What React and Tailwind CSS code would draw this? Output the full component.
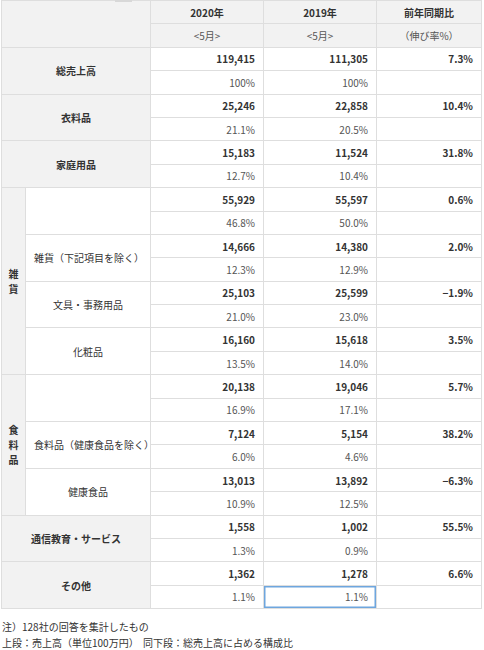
const ROWS = [
  { label: '総売上高', bold: true, v: ['119,415', '111,305', '7.3%'], p: ['100%', '100%'] },
  { label: '衣料品', bold: true, v: ['25,246', '22,858', '10.4%'], p: ['21.1%', '20.5%'] },
  { label: '家庭用品', bold: true, v: ['15,183', '11,524', '31.8%'], p: ['12.7%', '10.4%'] },
  { group: '雑貨', label: '', v: ['55,929', '55,597', '0.6%'], p: ['46.8%', '50.0%'] },
  { group: '雑貨', label: '雑貨（下記項目を除く）', v: ['14,666', '14,380', '2.0%'], p: ['12.3%', '12.9%'] },
  { group: '雑貨', label: '文具・事務用品', v: ['25,103', '25,599', '−1.9%'], p: ['21.0%', '23.0%'] },
  { group: '雑貨', label: '化粧品', v: ['16,160', '15,618', '3.5%'], p: ['13.5%', '14.0%'] },
  { group: '食料品', label: '', v: ['20,138', '19,046', '5.7%'], p: ['16.9%', '17.1%'] },
  { group: '食料品', label: '食料品（健康食品を除く）', v: ['7,124', '5,154', '38.2%'], p: ['6.0%', '4.6%'] },
  { group: '食料品', label: '健康食品', v: ['13,013', '13,892', '−6.3%'], p: ['10.9%', '12.5%'] },
  { label: '通信教育・サービス', bold: true, v: ['1,558', '1,002', '55.5%'], p: ['1.3%', '0.9%'] },
  { label: 'その他', bold: true, v: ['1,362', '1,278', '6.6%'], p: ['1.1%', '1.1%'], selected: true },
];

const GROUP_SIZE = { '雑貨': 4, '食料品': 3 };

const cell = 'border border-[#dedede] px-2 align-middle';

function VerticalLabel({ text }) {
  return (
    <div className="flex flex-col items-center leading-[15px] font-bold">
      {text.split('').map((c, i) => <span key={i}>{c}</span>)}
    </div>
  );
}

export default function App() {
  const seen = {};
  return (
    <div className="relative w-[484px] h-[650px] bg-white text-[#333] text-[10px]" style={{ fontFamily: '"Noto Sans CJK JP", "Noto Sans", sans-serif' }}>
      <div className="absolute left-[115px] top-0 w-[17px] h-[2px] bg-[#d8d8d8]" />
      <table className="ml-[1px] w-[480px] table-fixed border-collapse">
        <colgroup>
          <col className="w-[24px]" />
          <col className="w-[125px]" />
          <col className="w-[113px]" />
          <col className="w-[113px]" />
          <col className="w-[105px]" />
        </colgroup>
        <tbody>
          <tr className="h-[23.4px]">
            <td colSpan={2} rowSpan={2} className={`${cell} bg-[#f2f2f2]`} />
            <td className={`${cell} bg-[#f2f2f2] text-center font-bold`}>2020年</td>
            <td className={`${cell} bg-[#f2f2f2] text-center font-bold`}>2019年</td>
            <td className={`${cell} bg-[#f2f2f2] text-center font-bold`}>前年同期比</td>
          </tr>
          <tr className="h-[23.4px]">
            <td className={`${cell} bg-[#f2f2f2] text-center text-[#555]`}>&lt;5月&gt;</td>
            <td className={`${cell} bg-[#f2f2f2] text-center text-[#555]`}>&lt;5月&gt;</td>
            <td className={`${cell} bg-[#f2f2f2] text-center text-[#555]`}>（伸び率%）</td>
          </tr>
          {ROWS.map((r, i) => {
            let groupCell = null;
            if (r.group && !seen[r.group]) {
              seen[r.group] = true;
              groupCell = (
                <td rowSpan={GROUP_SIZE[r.group] * 2} className={`${cell} px-0 bg-[#f2f2f2] text-center`}>
                  <VerticalLabel text={r.group} />
                </td>
              );
            }
            return [
              <tr key={`${i}a`} className="h-[23.4px]">
                {groupCell}
                {r.group ? (
                  <td rowSpan={2} className={`${cell} px-0 text-center whitespace-nowrap bg-white`}>{r.label}</td>
                ) : (
                  <td colSpan={2} rowSpan={2} className={`${cell} text-center bg-[#f2f2f2] font-bold`}>{r.label}</td>
                )}
                <td className={`${cell} text-right font-bold`}>{r.v[0]}</td>
                <td className={`${cell} text-right font-bold`}>{r.v[1]}</td>
                <td className={`${cell} text-right font-bold`}>{r.v[2]}</td>
              </tr>,
              <tr key={`${i}b`} className="h-[23.4px]">
                <td className={`${cell} text-right text-[#555]`}>{r.p[0]}</td>
                <td className={`${cell} text-right text-[#555] ${r.selected ? 'shadow-[inset_0_0_0_1.5px_#6ea6de]' : ''}`}>{r.p[1]}</td>
                <td className={cell} />
              </tr>,
            ];
          })}
        </tbody>
      </table>
      <div className="pl-[2px] pt-[11px] whitespace-nowrap">
        <div className="leading-[14px]">注）128社の回答を集計したもの</div>
        <div className="flex mt-[3px] leading-[12px]">
          <span className="w-[141px] shrink-0">上段：売上高（単位100万円）</span>
          <span>同下段：総売上高に占める構成比</span>
        </div>
      </div>
    </div>
  );
}
